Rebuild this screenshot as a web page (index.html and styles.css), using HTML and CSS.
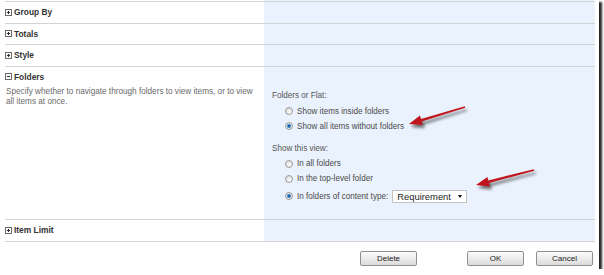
FILE: index.html
```html
<!DOCTYPE html>
<html lang="en">
<head>
    <meta charset="UTF-8">
    <meta name="viewport" content="width=device-width, initial-scale=1.0">
    <title>View Settings - Folders</title>
    <link rel="stylesheet" href="styles.css">
</head>
<body>
    <div class="shot">
        <div class="sections">
            <div class="row">
                <div class="cell-left">
                    <h3 class="head"><svg class="toggle" width="7" height="7" viewBox="0 0 7 7"><rect x="0.5" y="0.5" width="6" height="6" fill="#fff" stroke="#6b6b6b"/><path d="M2 3.5H5M3.5 2V5" stroke="#2b2b2b"/></svg>Group By</h3>
                </div>
                <div class="cell-right"></div>
            </div>
            <div class="row">
                <div class="cell-left">
                    <h3 class="head"><svg class="toggle" width="7" height="7" viewBox="0 0 7 7"><rect x="0.5" y="0.5" width="6" height="6" fill="#fff" stroke="#6b6b6b"/><path d="M2 3.5H5M3.5 2V5" stroke="#2b2b2b"/></svg>Totals</h3>
                </div>
                <div class="cell-right"></div>
            </div>
            <div class="row">
                <div class="cell-left">
                    <h3 class="head"><svg class="toggle" width="7" height="7" viewBox="0 0 7 7"><rect x="0.5" y="0.5" width="6" height="6" fill="#fff" stroke="#6b6b6b"/><path d="M2 3.5H5M3.5 2V5" stroke="#2b2b2b"/></svg>Style</h3>
                </div>
                <div class="cell-right"></div>
            </div>
            <div class="row">
                <div class="cell-left">
                    <h3 class="head"><svg class="toggle" width="7" height="7" viewBox="0 0 7 7"><rect x="0.5" y="0.5" width="6" height="6" fill="#fff" stroke="#6b6b6b"/><path d="M2 3.5H5" stroke="#2b2b2b"/></svg>Folders</h3>
                    <p class="desc">Specify whether to navigate through folders to view items, or to view all items at once.</p>
                </div>
                <div class="cell-right options">
                    <div class="group-label">Folders or Flat:</div>
                    <label class="opt"><input type="radio" class="radio" name="flat"><span>Show items inside folders</span></label>
                    <label class="opt"><input type="radio" class="radio" name="flat" checked><span>Show all items without folders</span></label>

                    <div class="group-label second">Show this view:</div>
                    <label class="opt"><input type="radio" class="radio" name="scope"><span>In all folders</span></label>
                    <label class="opt"><input type="radio" class="radio" name="scope"><span>In the top-level folder</span></label>
                    <label class="opt tall"><input type="radio" class="radio" name="scope" checked><span>In folders of content type:</span>
                        <span class="dropdown">Requirement<span class="caret"></span></span>
                    </label>
                </div>
            </div>
            <div class="row last">
                <div class="cell-left">
                    <h3 class="head"><svg class="toggle" width="7" height="7" viewBox="0 0 7 7"><rect x="0.5" y="0.5" width="6" height="6" fill="#fff" stroke="#6b6b6b"/><path d="M2 3.5H5M3.5 2V5" stroke="#2b2b2b"/></svg>Item Limit</h3>
                </div>
                <div class="cell-right"></div>
            </div>
        </div>

        <div class="actions">
            <button class="btn delete">Delete</button>
            <button class="btn">OK</button>
            <button class="btn">Cancel</button>
        </div>

        <!-- callout arrows drawn over the form -->
        <svg class="arrows" width="604" height="275" viewBox="0 0 604 275">
            <defs>
                <filter id="soft" x="-20%" y="-50%" width="140%" height="200%">
                    <feGaussianBlur stdDeviation="1.4"/>
                </filter>
            </defs>
            <g filter="url(#soft)" fill="#000" opacity="0.55" transform="translate(2 3)">
                <polygon points="409,124 422.9,125 421.8,121.5 465.2,107.7 464.8,106.3 421,118.9 419.9,115.4"/>
                <polygon points="476,185 489.9,186.6 489,183.1 534.2,170.7 533.8,169.3 488.3,180.4 487.4,176.9"/>
            </g>
            <g fill="#c0161d">
                <polygon points="409,124 422.9,125 421.8,121.5 465.2,107.7 464.8,106.3 421,118.9 419.9,115.4"/>
                <polygon points="476,185 489.9,186.6 489,183.1 534.2,170.7 533.8,169.3 488.3,180.4 487.4,176.9"/>
            </g>
        </svg>
    </div>
</body>
</html>
```

FILE: styles.css
```css
body {
    margin: 0;
    background: #fff;
    font-family: "Liberation Sans", Arial, sans-serif;
}
.shot {
    position: relative;
    width: 599px;
    height: 269px;
    background: #fff;
    box-shadow: 2px 3px 2px 1px rgba(0, 0, 0, 0.85);
}
.sections {
    margin-left: 5px;
    width: 590px;
    padding-top: 1px;
    background: linear-gradient(to right, transparent 259px, #eaf2fd 259px);
}
.row {
    display: grid;
    grid-template-columns: 259px 1fr;
    border-top: 1px solid #d3d3d3;
}
.row.last {
    border-bottom: 1px solid #d3d3d3;
}
.head {
    display: flex;
    align-items: center;
    height: 20.5px;
    margin: 0;
    font-size: 8.4px;
    font-weight: bold;
    color: #333;
}
.toggle {
    margin-right: 2px;
    flex: none;
}
.desc {
    margin: 0;
    padding-left: 1px;
    max-width: 250px;
    font-size: 8.2px;
    line-height: 10px;
    color: #6a6a6a;
}
.options {
    padding: 24.5px 0 13px 8px;
    font-size: 8.15px;
    color: #4a4a4a;
}
.group-label {
    line-height: 10px;
    margin-bottom: 2.5px;
    color: #555;
}
.group-label.second {
    margin-top: 10.5px;
    margin-bottom: 2px;
}
.opt {
    display: flex;
    align-items: center;
    height: 15px;
    margin-left: 13px;
}
.opt.tall {
    height: 20px;
}
.radio {
    appearance: none;
    box-sizing: border-box;
    width: 8px;
    height: 8px;
    margin: 0 4px 0 0;
    border: 1px solid #9c9c9c;
    border-radius: 50%;
    background: radial-gradient(circle at 65% 70%, #ffffff 0, #eeeeee 40%, #cbcbcb 100%);
}
.radio:checked {
    background: radial-gradient(circle at 50% 50%, #0d4f8f 0, #1e6db5 30%, #9cc3e6 48%, #e8e8e8 60%, #cccccc 100%);
}
.dropdown {
    position: relative;
    box-sizing: border-box;
    width: 75px;
    height: 13px;
    margin-left: 4px;
    padding-left: 4px;
    border: 1px solid #c2c2c2;
    background: #fff;
    font-size: 9.4px;
    line-height: 11px;
    color: #1e1e1e;
}
.caret {
    position: absolute;
    right: 4px;
    top: 4px;
    border-left: 2.5px solid transparent;
    border-right: 2.5px solid transparent;
    border-top: 3px solid #111;
}
.actions {
    display: flex;
    justify-content: flex-end;
    gap: 12px;
    padding: 9px 6px 0 0;
}
.btn {
    box-sizing: border-box;
    width: 57px;
    height: 15px;
    padding: 0;
    border: 1px solid #8f8f8f;
    border-radius: 2px;
    background: linear-gradient(#fbfbfb, #ececec 50%, #dadada);
    font-family: "Liberation Sans", Arial, sans-serif;
    font-size: 8px;
    color: #222;
}
.btn.delete {
    margin-right: 38px;
}
.arrows {
    position: absolute;
    left: 0;
    top: 0;
    pointer-events: none;
}
```
